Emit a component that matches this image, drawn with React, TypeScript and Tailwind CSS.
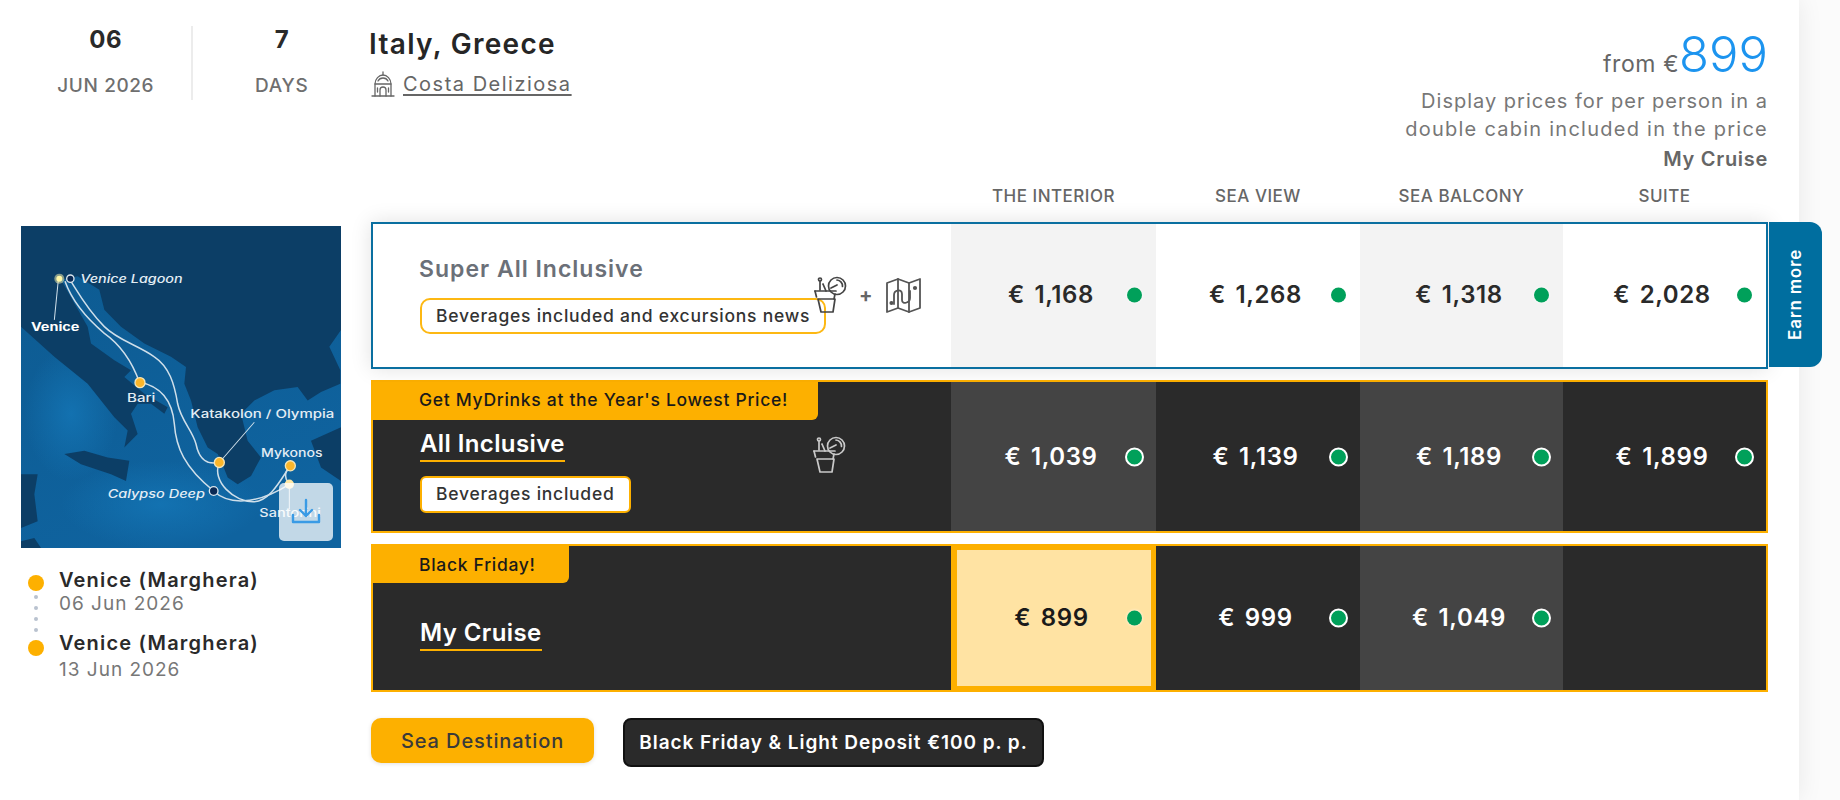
import React from "react";

function Cocktail({ color }: { color: string }) {
  return (
    <svg width="34" height="38" viewBox="0 0 34 38" fill="none" stroke={color} strokeWidth="1.7" strokeLinecap="round" strokeLinejoin="round">
      <circle cx="24" cy="10" r="8.5" />
      <path d="M24 4a6 6 0 0 1 5.5 6.5M18 12l6-3" />
      <path d="M7 5v9" />
      <circle cx="7" cy="3.5" r="1.5" />
      <path d="M2 15h21" />
      <path d="M2 15l1.5 6M22 18l-1 5" />
      <path d="M5 23h17l-2 13H8z" />
      <path d="M10 8l3 7" />
    </svg>
  );
}

function MapIcon() {
  return (
    <svg width="37" height="37" viewBox="0 0 37 37" fill="none" stroke="#555" strokeWidth="1.8" strokeLinejoin="round" strokeLinecap="round">
      <path d="M2 6l11-4 11 4 11-4v29l-11 4-11-4-11 4z" />
      <path d="M13 2v29M24 6v29" />
      <path d="M9 27v-9c0-5 8-7 8-1v6c0 5 8 3 8-2v-7" />
      <circle cx="6.5" cy="26" r="1.2" fill="#555" />
      <circle cx="30" cy="11" r="1.2" fill="#555" />
    </svg>
  );
}

function ShipIcon() {
  return (
    <svg width="24" height="26" viewBox="0 0 24 26" fill="none" stroke="#666" strokeWidth="1.3" strokeLinejoin="round" strokeLinecap="round">
      <path d="M1 25h22" />
      <path d="M12 1v3" />
      <path d="M4 25V13c0-5 4-9 8-9s8 4 8 9v12" />
      <path d="M4 13h16M7 10c1-2 3-3 5-3s4 1 5 3" />
      <path d="M9 25v-6a3 3 0 0 1 6 0v6" />
      <path d="M6.5 17v4M17.5 17v4" />
    </svg>
  );
}

function RouteMap() {
  const line = "#cfdfea";
  return (
    <svg viewBox="0 0 960 960" preserveAspectRatio="none" className="block w-[320px] h-[322px]">
      <defs>
        <linearGradient id="sea" x1="0" y1="0" x2="0.4" y2="1">
          <stop offset="0" stopColor="#0d5a90" />
          <stop offset="1" stopColor="#0f639f" />
        </linearGradient>
        <radialGradient id="glow" cx="0.5" cy="0.5" r="0.5">
          <stop offset="0" stopColor="#1476b6" stopOpacity="0.8" />
          <stop offset="1" stopColor="#1476b6" stopOpacity="0" />
        </radialGradient>
      </defs>
      <rect width="960" height="960" fill="url(#sea)" />
      <ellipse cx="420" cy="830" rx="300" ry="130" fill="url(#glow)" />
      <ellipse cx="150" cy="560" rx="140" ry="200" fill="url(#glow)" />
      <path
        fill="#0c3e66"
        d="M0 0H960V310L925 360L958 430V470L900 495L860 520L830 480L760 490L700 520L660 560L680 640L720 690L690 745L650 770L620 750L600 700L590 680L560 660L530 600L510 520L490 470L495 420L450 390L370 350L300 300L250 250L235 190L170 150L120 160L200 300L210 350L280 400L330 430L310 450L370 500L440 540L430 560L390 530L350 530L330 560L350 620L310 660L320 610L280 570L200 470L100 390L0 300Z"
      />
      <path fill="#0c3e66" d="M130 680L190 670L260 690L325 700L315 760L270 740L180 710Z" />
      <path fill="#0c3e66" d="M0 740L50 740L40 800L50 880L0 900Z" />
      <path fill="#0c3e66" d="M870 640L960 600V760L900 720Z" />
      <path fill="#0c3e66" d="M0 940L40 930L60 960H0Z" />
      <g fill="none" stroke={line} strokeWidth="4.5">
        <path d="M150 165C175 205 200 250 250 300C290 340 350 355 400 390C445 420 460 470 470 530C480 580 515 610 525 650C535 700 560 712 595 705" />
        <path d="M132 165C150 215 190 270 250 320C300 355 335 410 355 465" />
        <path d="M355 465C430 480 455 530 460 590C465 660 490 720 578 790" />
        <path d="M595 705C570 760 640 825 700 822C750 820 785 745 808 715" />
        <path d="M578 790C620 830 700 835 805 770" />
        <path d="M805 770C785 745 795 730 808 715" />
        <path d="M112 160L100 280M595 705L700 585M805 770V845" strokeWidth="3" />
      </g>
      <circle cx="115" cy="157" r="15" fill="#fff7b0" opacity="0.5" />
      <circle cx="115" cy="157" r="9" fill="#fff7a6" />
      <circle cx="148" cy="157" r="11" fill="#0b2a55" stroke="#dbe6ee" strokeWidth="4" />
      <circle cx="357" cy="467" r="15" fill="#fbb62a" stroke="#f5e6b8" strokeWidth="4" />
      <circle cx="595" cy="705" r="15" fill="#fbb62a" stroke="#f5e6b8" strokeWidth="4" />
      <circle cx="808" cy="715" r="15" fill="#fbb62a" stroke="#f5e6b8" strokeWidth="4" />
      <circle cx="805" cy="770" r="14" fill="#fde7a5" />
      <circle cx="578" cy="790" r="13" fill="#0b2a55" stroke="#dbe6ee" strokeWidth="4" />
      <g fill="#e3edf4" fontFamily="Inter, sans-serif" fontSize="33" fontWeight="500">
        <text x="178" y="170" fontStyle="italic" textLength="307" lengthAdjust="spacingAndGlyphs">Venice Lagoon</text>
        <text x="30" y="312" fontWeight="700" fill="#fff" textLength="145" lengthAdjust="spacingAndGlyphs">Venice</text>
        <text x="318" y="526" textLength="85" lengthAdjust="spacingAndGlyphs">Bari</text>
        <text x="508" y="572" textLength="432" lengthAdjust="spacingAndGlyphs">Katakolon / Olympia</text>
        <text x="720" y="688" textLength="185" lengthAdjust="spacingAndGlyphs">Mykonos</text>
        <text x="260" y="811" fontStyle="italic" textLength="292" lengthAdjust="spacingAndGlyphs">Calypso Deep</text>
        <text x="715" y="869" textLength="185" lengthAdjust="spacingAndGlyphs">Santorini</text>
      </g>
    </svg>
  );
}

function PriceCell({ price, bg, tone, ringed }: { price?: string; bg: string; tone: string; ringed?: boolean }) {
  return (
    <div className={`relative flex items-center justify-center pr-[5px] ${bg}`}>
      {price && (
        <>
          <span className={`text-[24px] font-semibold tracking-[0.6px] [word-spacing:3px] whitespace-pre ${tone}`}>{price}</span>
          {ringed ? (
            <span className="absolute right-[12px] top-1/2 -translate-y-1/2 w-[19px] h-[19px] rounded-full bg-[#00a05a] border-2 border-white" />
          ) : (
            <span className="absolute right-[14px] top-1/2 -mt-[1px] -translate-y-1/2 w-[15px] h-[15px] rounded-full bg-[#00a05a] shadow-[0_0_3px_rgba(255,255,255,0.9)]" />
          )}
        </>
      )}
    </div>
  );
}

const cols = "grid grid-cols-[578px_205px_204px_203px_203px]";

export default function App() {
  return (
    <div className="w-[1840px] h-[800px] overflow-hidden bg-[#fbfbfb] text-[#2a2a2a] font-[Inter,sans-serif]">
      <div className="flex w-[1799px] h-[800px] bg-white shadow-[0_0_24px_rgba(0,0,0,0.08)]">
        {/* left column */}
        <div className="w-[371px] shrink-0 pl-[21px]">
          <div className="flex h-[226px] items-start pt-[26px]">
            <div className="w-[172px] h-[74px] flex flex-col items-center border-r-2 border-[#ececec]">
              <div className="text-[24px] leading-[28px] font-bold tracking-[0.5px]">06</div>
              <div className="mt-[20px] text-[19px] leading-[24px] font-medium text-[#6f6f6f] tracking-[0.6px]">JUN 2026</div>
            </div>
            <div className="w-[179px] flex flex-col items-center">
              <div className="text-[24px] leading-[28px] font-bold">7</div>
              <div className="mt-[20px] text-[19px] leading-[24px] font-medium text-[#6f6f6f] tracking-[0.8px]">DAYS</div>
            </div>
          </div>
          <div className="relative w-[320px] h-[322px]">
            <RouteMap />
            <div className="absolute right-[8px] bottom-[7px] w-[54px] h-[58px] rounded-[5px] bg-white/75 flex items-center justify-center">
              <svg width="30" height="28" viewBox="0 0 30 28" fill="none" stroke="#3a9be5" strokeWidth="2.4" strokeLinecap="round" strokeLinejoin="round">
                <path d="M15 2v16M9 12l6 6 6-6" />
                <path d="M2 17v7h26v-7" />
              </svg>
            </div>
          </div>
          <div className="flex mt-[21px]">
            <div className="ml-[7px] w-[16px] pt-[6px] flex flex-col items-center">
              <span className="w-[16px] h-[16px] rounded-full bg-[#fdb000]" />
              <div className="h-[49px] pt-[4px] flex flex-col items-center gap-[7px]">
                <span className="w-[4px] h-[4px] shrink-0 rounded-full bg-[#b9c2cf]" />
                <span className="w-[4px] h-[4px] shrink-0 rounded-full bg-[#b9c2cf]" />
                <span className="w-[4px] h-[4px] shrink-0 rounded-full bg-[#b9c2cf]" />
                <span className="w-[4px] h-[4px] shrink-0 rounded-full bg-[#b9c2cf]" />
              </div>
              <span className="w-[16px] h-[16px] rounded-full bg-[#fdb000]" />
            </div>
            <div className="ml-[15px]">
              <div className="text-[20px] leading-[24px] font-semibold tracking-[1.2px] -mt-[1px]">Venice (Marghera)</div>
              <div className="text-[19px] leading-[24px] text-[#777] tracking-[1px]">06 Jun 2026</div>
              <div className="mt-[15px] text-[20px] leading-[24px] font-semibold tracking-[1.2px]">Venice (Marghera)</div>
              <div className="mt-[3px] text-[19px] leading-[24px] text-[#777] tracking-[1px]">13 Jun 2026</div>
            </div>
          </div>
        </div>

        {/* right column */}
        <div className="w-[1397px] shrink-0">
          <div className="h-[176px] flex justify-between">
            <div className="pt-[27px]">
              <div className="-ml-[2px] text-[28px] leading-[34px] font-semibold tracking-[1.3px] text-[#262626]">Italy, Greece</div>
              <div className="mt-[10px] flex items-center gap-[8px]">
                <ShipIcon />
                <span className="text-[20px] leading-[26px] text-[#666] underline underline-offset-[3px] tracking-[1.5px]">Costa Deliziosa</span>
              </div>
            </div>
            <div className="pt-[26px] text-right">
              <div className="flex items-baseline justify-end h-[61px]">
                <span className="text-[23px] text-[#666] tracking-[0.6px]">from €</span>
                <span className="text-[49px] leading-[58px] font-light text-[#1c94ef]">899</span>
              </div>
              <div className="text-[20px] leading-[28px] text-[#777] tracking-[1px]">Display prices for per person in a</div>
              <div className="text-[20px] leading-[28px] text-[#777] tracking-[1.25px]">double cabin included in the price</div>
              <div className="text-[20px] leading-[32px] font-semibold text-[#666] tracking-[0.7px]">My Cruise</div>
            </div>
          </div>

          <div className={`${cols} h-[46px] pb-[4px] px-[2px] items-center text-center text-[17px] font-medium text-[#666] tracking-[0.5px]`}>
            <div />
            <div>THE INTERIOR</div>
            <div>SEA VIEW</div>
            <div>SEA BALCONY</div>
            <div>SUITE</div>
          </div>

          {/* Super All Inclusive */}
          <div className="relative h-[147px] border-2 border-[#0a6fa0] bg-white shadow-[0_0_20px_rgba(0,0,0,0.12)]">
            <div className={`${cols} h-full`}>
              <div className="relative pl-[47px] pt-[30px]">
                <div className="-ml-[1px] text-[23px] leading-[30px] font-semibold text-[#6b7078] tracking-[1px]">Super All Inclusive</div>
                <div className="mt-[14px] inline-flex h-[36px] items-center px-[14px] rounded-[10px] border-2 border-[#fdb813] text-[17.5px] tracking-[0.74px] font-medium text-[#333] whitespace-nowrap">
                  Beverages included and excursions news
                </div>
                <div className="absolute left-[440px] top-[52px] flex items-center gap-[12px]">
                  <Cocktail color="#444" />
                  <span className="text-[20px] font-bold text-[#666]">+</span>
                  <MapIcon />
                </div>
              </div>
              <PriceCell price="€ 1,168" bg="bg-[#f3f3f3] pb-[2px]" tone="text-[#2a2a2a]" />
              <PriceCell price="€ 1,268" bg="bg-white pb-[2px]" tone="text-[#2a2a2a]" />
              <PriceCell price="€ 1,318" bg="bg-[#f3f3f3] pb-[2px]" tone="text-[#2a2a2a]" />
              <PriceCell price="€ 2,028" bg="bg-white pb-[2px]" tone="text-[#2a2a2a]" />
            </div>
            <div className="absolute left-[1396px] top-[-2px] bottom-0 w-[53px] rounded-r-[12px] bg-[#006e9f] flex items-center justify-center">
              <span className="[writing-mode:vertical-rl] rotate-180 text-[17px] tracking-[0.8px] font-semibold text-white">Earn more</span>
            </div>
          </div>

          {/* All Inclusive */}
          <div className="mt-[11px] h-[153px] border-2 border-[#fdb000] bg-[#2a2a2a]">
            <div className={`${cols} h-full`}>
              <div className="relative flex flex-col items-start">
                <div className="h-[38px] w-[445px] pl-[46px] pb-[1px] flex items-center rounded-br-[6px] bg-[#fdb000] text-[17.5px] tracking-[0.7px] font-medium text-[#1a1a1a] whitespace-nowrap">
                  Get MyDrinks at the Year's Lowest Price!
                </div>
                <div className="ml-[47px] mt-[8px] text-[24px] leading-[32px] font-semibold text-white border-b-2 border-[#fdb000] tracking-[0.4px]">All Inclusive</div>
                <div className="ml-[47px] mt-[14px] inline-flex h-[37px] items-center px-[14px] rounded-[6px] border-2 border-[#fdb000] bg-white text-[17.5px] tracking-[0.74px] font-medium text-[#333] whitespace-nowrap">
                  Beverages included
                </div>
                <div className="absolute left-[439px] top-[54px]">
                  <Cocktail color="#c9c9c9" />
                </div>
              </div>
              <PriceCell price="€ 1,039" bg="bg-[#444444]" tone="text-white" ringed />
              <PriceCell price="€ 1,139" bg="bg-[#2a2a2a]" tone="text-white" ringed />
              <PriceCell price="€ 1,189" bg="bg-[#444444]" tone="text-white" ringed />
              <PriceCell price="€ 1,899" bg="bg-[#2a2a2a]" tone="text-white" ringed />
            </div>
          </div>

          {/* My Cruise */}
          <div className="mt-[11px] h-[148px] border-2 border-[#fdb000] bg-[#2a2a2a]">
            <div className={`${cols} h-full`}>
              <div className="flex flex-col items-start">
                <div className="h-[37px] w-[196px] pl-[46px] pt-[1px] flex items-center rounded-br-[6px] bg-[#fdb000] text-[17.5px] tracking-[0.7px] font-medium text-[#1a1a1a]">Black Friday!</div>
                <div className="ml-[47px] mt-[34px] text-[24px] leading-[32px] font-semibold text-white border-b-2 border-[#fdb000] tracking-[0.4px]">My Cruise</div>
              </div>
              <div className="relative flex items-center justify-center pr-[5px] border-y-[4px] border-l-[6px] border-r-[5px] border-[#fdb000] bg-[#ffe3a3]">
                <span className="text-[24px] font-semibold text-[#1a1a1a] tracking-[0.6px] [word-spacing:3px]">€ 899</span>
                <span className="absolute right-[9px] top-1/2 -translate-y-1/2 w-[15px] h-[15px] rounded-full bg-[#00a05a] shadow-[0_0_3px_rgba(255,255,255,0.9)]" />
              </div>
              <PriceCell price="€ 999" bg="bg-[#2a2a2a]" tone="text-white" ringed />
              <PriceCell price="€ 1,049" bg="bg-[#444444]" tone="text-white" ringed />
              <PriceCell bg="bg-[#2a2a2a]" tone="text-white" />
            </div>
          </div>

          <div className="mt-[26px] flex items-start">
            <div className="w-[223px] h-[45px] pt-[1px] rounded-[10px] bg-[#fdb000] flex items-center justify-center text-[20px] tracking-[0.9px] font-medium text-[#3a3a3a] shadow-[0_1px_4px_rgba(0,0,0,0.12)]">Sea Destination</div>
            <div className="ml-[29px] w-[421px] h-[49px] pt-[1px] rounded-[8px] bg-[#2a2a2a] border-2 border-[#111] flex items-center justify-center text-[19px] tracking-[0.95px] font-semibold text-white whitespace-nowrap">Black Friday &amp; Light Deposit €100 p. p.</div>
          </div>
        </div>
      </div>
    </div>
  );
}
